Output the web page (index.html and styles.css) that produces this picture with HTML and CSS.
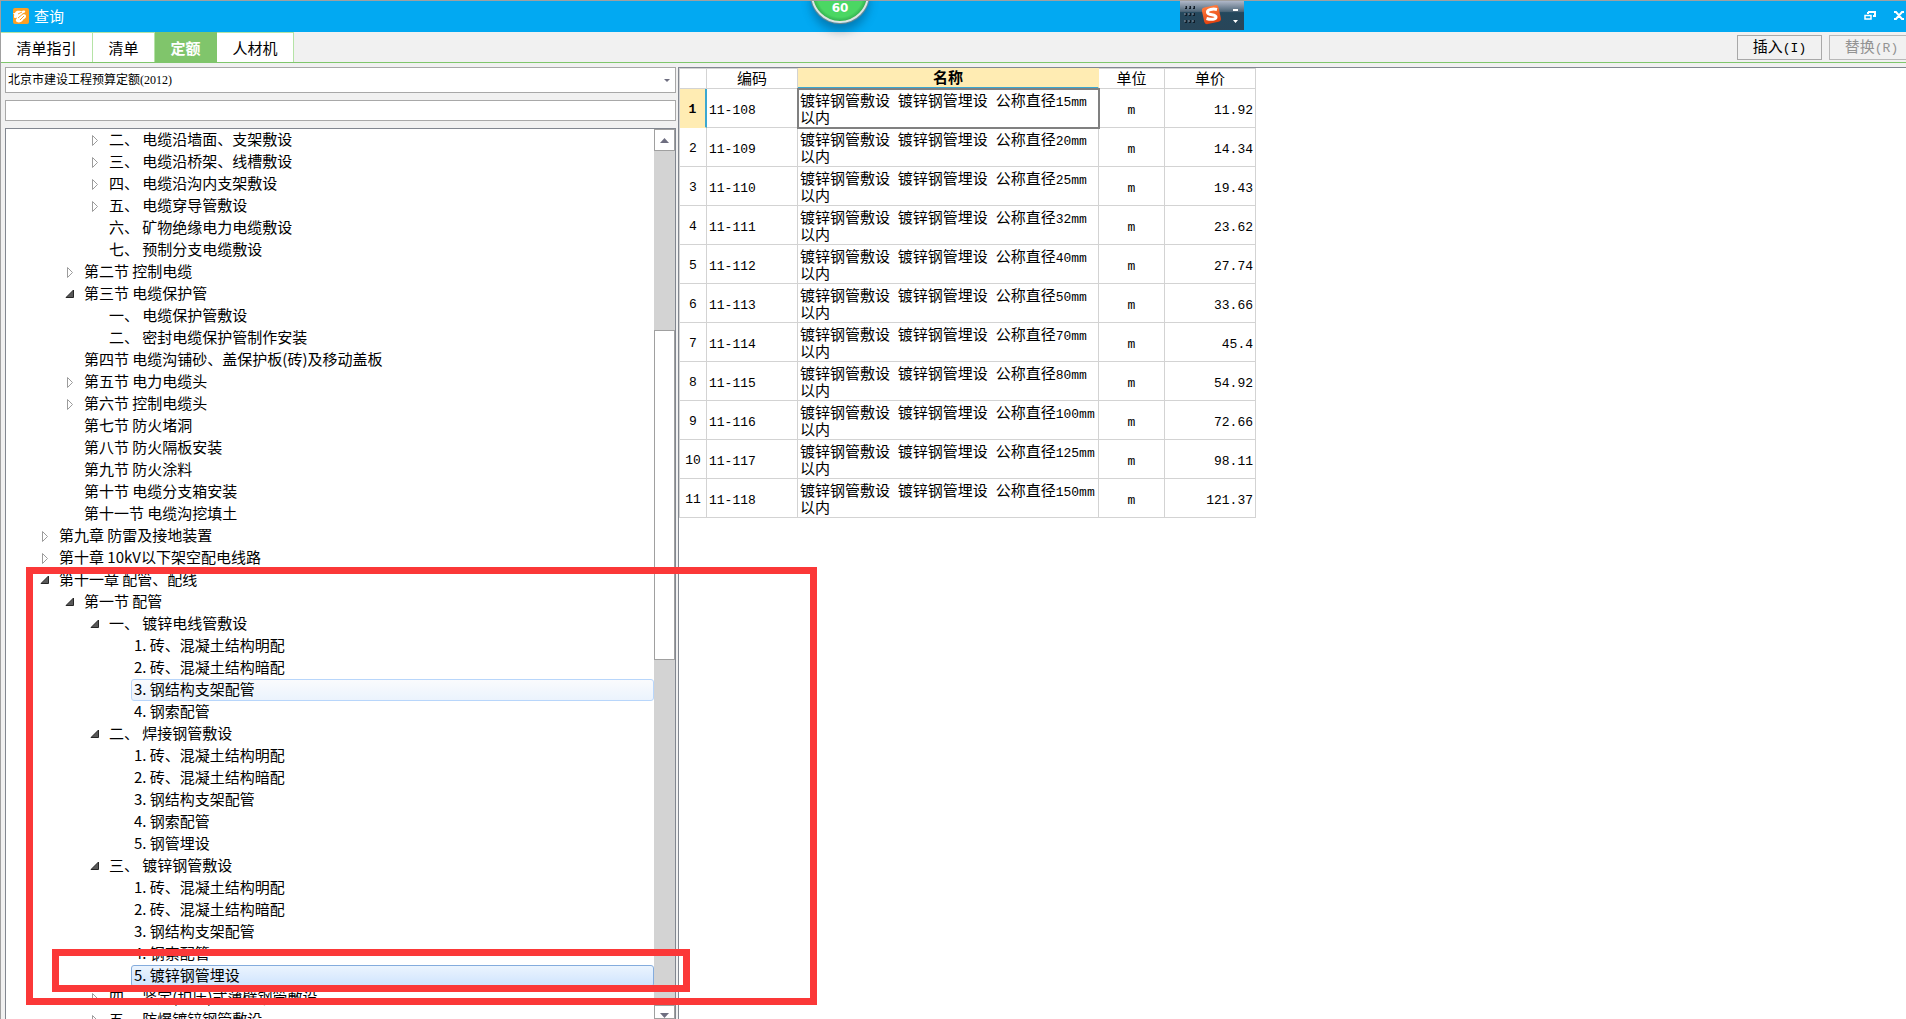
FILE: index.html
```html
<!DOCTYPE html>
<html lang="zh-CN">
<head>
<meta charset="utf-8">
<title>查询</title>
<link rel="stylesheet" href="styles.css">
</head>
<body>
<svg class="defs" aria-hidden="true">
  <symbol id="closed" viewBox="0 0 16 22"><path d="M2.5 6.500v10l5-5z" fill="#fff" stroke="#9c9c9c"/></symbol>
  <symbol id="open" viewBox="0 0 16 22"><path d="M8.500 7v7.500H1z" fill="#595959" stroke="#262626"/></symbol>
</svg>
<div class="window">
  <header class="titlebar">
    <svg class="app-icon" viewBox="0 0 16 16" aria-hidden="true">
      <rect width="16" height="16" rx="2" fill="#fba026"/>
      <path d="M2 5c1-3 4-2 6-2s3-1 4 0-1 2-3 3 4-1 4 2-2 2-3 4-4 3-6 2-1-3 0-4-3 1-3-1 1-2-1-4z" fill="#fff"/>
      <path d="M5 6l4-2M5 10l6-5M7 12l4-4" stroke="#fba026" fill="none"/>
    </svg>
    <h1>查询</h1>
    <div class="window-buttons">
      <button type="button" aria-label="还原"><svg width="12" height="10" viewBox="0 0 12 10"><path d="M4 1h7v4H9M4 1v2" fill="none" stroke="#fff" stroke-width="2"/><rect x="1" y="4.500" width="6" height="3.500" fill="none" stroke="#fff" stroke-width="1.500"/></svg></button>
      <button type="button" aria-label="关闭"><svg width="12" height="10" viewBox="0 0 12 10"><path d="M1 1h2l6 7h2M11 1H9L3 8H1" fill="none" stroke="#fff" stroke-width="2"/></svg></button>
    </div>
  </header>
  <div class="toolbar">
    <nav class="tabs">
      <button type="button" class="tab tab-wide">清单指引</button>
      <button type="button" class="tab">清单</button>
      <button type="button" class="tab active">定额</button>
      <button type="button" class="tab last">人材机</button>
    </nav>
    <div class="actions">
      <button type="button" class="action">插入<span class="latin">(I)</span></button>
      <button type="button" class="action" disabled>替换<span class="latin">(R)</span></button>
    </div>
  </div>
  <main class="content">
    <section class="side">
      <div class="combo">
        <select aria-label="定额库"><option>北京市建设工程预算定额(2012)</option></select>
        <svg class="combo-arrow" width="6" height="3" viewBox="0 0 6 3"><path d="M0 0h6L3 3z" fill="#6e6e80"/></svg>
      </div>
      <input class="search" type="text" aria-label="搜索">
      <div class="tree-box">
        <ul class="tree">
          <li class="l3"><svg><use href="#closed"/></svg><span>二、 电缆沿墙面、支架敷设</span></li>
          <li class="l3"><svg><use href="#closed"/></svg><span>三、 电缆沿桥架、线槽敷设</span></li>
          <li class="l3"><svg><use href="#closed"/></svg><span>四、 电缆沿沟内支架敷设</span></li>
          <li class="l3"><svg><use href="#closed"/></svg><span>五、 电缆穿导管敷设</span></li>
          <li class="l3"><svg></svg><span>六、 矿物绝缘电力电缆敷设</span></li>
          <li class="l3"><svg></svg><span>七、 预制分支电缆敷设</span></li>
          <li class="l2"><svg><use href="#closed"/></svg><span>第二节 控制电缆</span></li>
          <li class="l2"><svg><use href="#open"/></svg><span>第三节 电缆保护管</span></li>
          <li class="l3"><svg></svg><span>一、 电缆保护管敷设</span></li>
          <li class="l3"><svg></svg><span>二、 密封电缆保护管制作安装</span></li>
          <li class="l2"><svg></svg><span>第四节 电缆沟铺砂、盖保护板(砖)及移动盖板</span></li>
          <li class="l2"><svg><use href="#closed"/></svg><span>第五节 电力电缆头</span></li>
          <li class="l2"><svg><use href="#closed"/></svg><span>第六节 控制电缆头</span></li>
          <li class="l2"><svg></svg><span>第七节 防火堵洞</span></li>
          <li class="l2"><svg></svg><span>第八节 防火隔板安装</span></li>
          <li class="l2"><svg></svg><span>第九节 防火涂料</span></li>
          <li class="l2"><svg></svg><span>第十节 电缆分支箱安装</span></li>
          <li class="l2"><svg></svg><span>第十一节 电缆沟挖填土</span></li>
          <li class="l1"><svg><use href="#closed"/></svg><span>第九章 防雷及接地装置</span></li>
          <li class="l1"><svg><use href="#closed"/></svg><span>第十章 10kV以下架空配电线路</span></li>
          <li class="l1"><svg><use href="#open"/></svg><span>第十一章 配管、配线</span></li>
          <li class="l2"><svg><use href="#open"/></svg><span>第一节 配管</span></li>
          <li class="l3"><svg><use href="#open"/></svg><span>一、 镀锌电线管敷设</span></li>
          <li class="l4"><svg></svg><span>1. 砖、混凝土结构明配</span></li>
          <li class="l4"><svg></svg><span>2. 砖、混凝土结构暗配</span></li>
          <li class="l4 hovered"><svg></svg><span>3. 钢结构支架配管</span></li>
          <li class="l4"><svg></svg><span>4. 钢索配管</span></li>
          <li class="l3"><svg><use href="#open"/></svg><span>二、 焊接钢管敷设</span></li>
          <li class="l4"><svg></svg><span>1. 砖、混凝土结构明配</span></li>
          <li class="l4"><svg></svg><span>2. 砖、混凝土结构暗配</span></li>
          <li class="l4"><svg></svg><span>3. 钢结构支架配管</span></li>
          <li class="l4"><svg></svg><span>4. 钢索配管</span></li>
          <li class="l4"><svg></svg><span>5. 钢管埋设</span></li>
          <li class="l3"><svg><use href="#open"/></svg><span>三、 镀锌钢管敷设</span></li>
          <li class="l4"><svg></svg><span>1. 砖、混凝土结构明配</span></li>
          <li class="l4"><svg></svg><span>2. 砖、混凝土结构暗配</span></li>
          <li class="l4"><svg></svg><span>3. 钢结构支架配管</span></li>
          <li class="l4"><svg></svg><span>4. 钢索配管</span></li>
          <li class="l4 selected"><svg></svg><span>5. 镀锌钢管埋设</span></li>
          <li class="l3"><svg><use href="#closed"/></svg><span>四、 紧定(扣压)式薄壁钢管敷设</span></li>
          <li class="l3"><svg><use href="#closed"/></svg><span>五、 防爆镀锌钢管敷设</span></li>
        </ul>
        <div class="scrollbar">
          <button type="button" class="scroll-button" aria-label="向上"><svg width="9" height="5" viewBox="0 0 9 5"><path d="M0 5h9L4.500 0z" fill="#6e6e80"/></svg></button>
          <div class="track-before"></div>
          <div class="thumb"></div>
          <div class="track-after"></div>
          <button type="button" class="scroll-button" aria-label="向下"><svg width="9" height="5" viewBox="0 0 9 5"><path d="M0 0h9L4.500 5z" fill="#6e6e80"/></svg></button>
        </div>
      </div>
    </section>
    <section class="grid-pane">
      <table class="grid">
        <colgroup><col class="c-index"><col class="c-code"><col class="c-name"><col class="c-unit"><col class="c-price"></colgroup>
        <thead><tr><th></th><th>编码</th><th class="current">名称</th><th>单位</th><th>单价</th></tr></thead>
        <tbody>
          <tr class="current-row"><th>1</th><td>11-108</td><td class="name current-cell">镀锌钢管敷设<span class="latin"> </span>镀锌钢管埋设<span class="latin"> </span>公称直径<span class="latin">15mm</span><br>以内</td><td class="unit">m</td><td class="price">11.92</td></tr>
          <tr><th>2</th><td>11-109</td><td class="name">镀锌钢管敷设<span class="latin"> </span>镀锌钢管埋设<span class="latin"> </span>公称直径<span class="latin">20mm</span><br>以内</td><td class="unit">m</td><td class="price">14.34</td></tr>
          <tr><th>3</th><td>11-110</td><td class="name">镀锌钢管敷设<span class="latin"> </span>镀锌钢管埋设<span class="latin"> </span>公称直径<span class="latin">25mm</span><br>以内</td><td class="unit">m</td><td class="price">19.43</td></tr>
          <tr><th>4</th><td>11-111</td><td class="name">镀锌钢管敷设<span class="latin"> </span>镀锌钢管埋设<span class="latin"> </span>公称直径<span class="latin">32mm</span><br>以内</td><td class="unit">m</td><td class="price">23.62</td></tr>
          <tr><th>5</th><td>11-112</td><td class="name">镀锌钢管敷设<span class="latin"> </span>镀锌钢管埋设<span class="latin"> </span>公称直径<span class="latin">40mm</span><br>以内</td><td class="unit">m</td><td class="price">27.74</td></tr>
          <tr><th>6</th><td>11-113</td><td class="name">镀锌钢管敷设<span class="latin"> </span>镀锌钢管埋设<span class="latin"> </span>公称直径<span class="latin">50mm</span><br>以内</td><td class="unit">m</td><td class="price">33.66</td></tr>
          <tr><th>7</th><td>11-114</td><td class="name">镀锌钢管敷设<span class="latin"> </span>镀锌钢管埋设<span class="latin"> </span>公称直径<span class="latin">70mm</span><br>以内</td><td class="unit">m</td><td class="price">45.4</td></tr>
          <tr><th>8</th><td>11-115</td><td class="name">镀锌钢管敷设<span class="latin"> </span>镀锌钢管埋设<span class="latin"> </span>公称直径<span class="latin">80mm</span><br>以内</td><td class="unit">m</td><td class="price">54.92</td></tr>
          <tr><th>9</th><td>11-116</td><td class="name">镀锌钢管敷设<span class="latin"> </span>镀锌钢管埋设<span class="latin"> </span>公称直径<span class="latin">100mm</span><br>以内</td><td class="unit">m</td><td class="price">72.66</td></tr>
          <tr><th>10</th><td>11-117</td><td class="name">镀锌钢管敷设<span class="latin"> </span>镀锌钢管埋设<span class="latin"> </span>公称直径<span class="latin">125mm</span><br>以内</td><td class="unit">m</td><td class="price">98.11</td></tr>
          <tr><th>11</th><td>11-118</td><td class="name">镀锌钢管敷设<span class="latin"> </span>镀锌钢管埋设<span class="latin"> </span>公称直径<span class="latin">150mm</span><br>以内</td><td class="unit">m</td><td class="price">121.37</td></tr>
        </tbody>
      </table>
    </section>
  </main>
  <div class="speed-ball">60</div>
  <div class="ime-bar">
    <svg width="64" height="30" viewBox="0 0 64 30" aria-hidden="true">
      <defs>
        <linearGradient id="bar" x1="0" y1="0" x2="0" y2="1"><stop offset="0" stop-color="#b9bfd0"/><stop offset=".38" stop-color="#4f6779"/><stop offset=".42" stop-color="#24485d"/><stop offset="1" stop-color="#294558"/></linearGradient>
        <linearGradient id="logo" x1="0" y1="0" x2="0" y2="1"><stop offset="0" stop-color="#ff7a3c"/><stop offset="1" stop-color="#e2420f"/></linearGradient>
      </defs>
      <rect width="64" height="30" fill="url(#bar)"/>
      <path d="M5 7.500h2m2 0h2m2 0h2M5 14.500h2m2 0h2m2 0h2M5 21.500h2m2 0h2m2 0h2" stroke="#101c28" stroke-width="3"/>
      <path d="M4 7h2m2 0h2m2 0h2M4 14h2m2 0h2m2 0h2M4 21h2m2 0h2m2 0h2" stroke="#8f9ba8" stroke-width="1"/>
      <rect x="23" y="6" width="17" height="17" rx="3" fill="url(#logo)" transform="rotate(-12 32 15)"/>
      <path d="M37 9.500c-4-1-10 0-9.500 3 .5 3 8.500 1.500 8.500 4.500 0 2.500-5 3-9.500 1.500" fill="none" stroke="#fff" stroke-width="3"/>
      <path d="M53 9h5v2h-5zM53 20h5l-2.500 3z" fill="#fff"/>
    </svg>
  </div>
  <div class="mark mark-outer"></div>
  <div class="mark mark-inner"></div>
</div>
</body>
</html>
```
FILE: styles.css
```css
* { box-sizing: border-box; }
body {
  margin: 0;
  font: 15px/20px "Noto Sans CJK SC", sans-serif;
  color: #000;
}
button, input, select { font: inherit; color: inherit; margin: 0; padding: 0; border-radius: 0; }
.defs { position: absolute; width: 0; height: 0; }
.window {
  position: relative;
  display: flex;
  flex-direction: column;
  height: 100vh;
  overflow: hidden;
  background: #f1f1f1;
  border-top: 1px solid #a0a0a0;
  border-left: 1px solid #a0a0a0;
}
.latin { font-family: "Liberation Mono", monospace; font-size: 13px; }

/* title bar */
.titlebar {
  flex: none;
  display: flex;
  align-items: center;
  height: 31px;
  padding: 0 0 2px 12px;
  background: #02a9f2;
  color: #fff;
}
.app-icon { width: 16px; height: 16px; }
h1 { margin: 0 0 0 5px; font-size: 15px; font-weight: 400; }
.window-buttons { display: flex; gap: 17px; margin-left: auto; padding-right: 1px; }
.window-buttons button { display: flex; border: 0; background: none; }

/* tabs and actions */
.toolbar {
  flex: none;
  display: flex;
  justify-content: space-between;
  height: 31px;
  border-bottom: 1px solid #7fc66c;
}
.tabs { display: flex; }
.tab {
  width: 62px;
  border: 0 solid #b5e3a6;
  border-width: 1px 1px 0 0;
  background: #fff;
}
.tab-wide { width: 92px; }
.tab.active { background: #80c56b; border-color: #80c56b; color: #fff; font-weight: 700; }
.tab.last { width: 77px; }
.actions { display: flex; gap: 7px; padding-top: 3px; margin-right: -8px; }
.action { width: 85px; height: 25px; border: 1px solid #a8a8a8; background: #f1f1f1; }
.action:disabled { border-color: #b8b8b8; color: #939393; }

/* left pane */
.content { flex: 1; display: flex; gap: 2px; min-height: 0; padding-top: 4px; }
.side { flex: 0 0 675px; display: flex; flex-direction: column; padding-left: 4px; min-height: 0; }
.combo { position: relative; flex: none; height: 26px; }
.combo select {
  appearance: none;
  width: 100%;
  height: 100%;
  padding-left: 2px;
  border: 1px solid #a8a8a8;
  background: #fff;
  font: 12px/20px "Liberation Serif", "Noto Sans CJK SC", serif;
}
.combo-arrow { position: absolute; right: 6px; top: 12px; }
.search {
  flex: none;
  width: 100%;
  height: 21px;
  margin: 7px 0;
  border: 1px solid #a8a8a8;
  background: #fff;
}
.tree-box {
  flex: 1;
  display: flex;
  min-height: 0;
  border: 1px solid #828790;
  border-bottom: 0;
  background: #fff;
}
.tree { flex: 1; margin: 0; padding: 0; list-style: none; overflow: hidden; }
.tree li { display: flex; height: 22px; }
.tree svg { flex: none; width: 16px; height: 22px; }
.tree span {
  flex: 1;
  padding-left: 2px;
  border: 1px solid transparent;
  border-radius: 3px;
  line-height: 18px;
  white-space: nowrap;
}
.l1 { padding-left: 34px; }
.l2 { padding-left: 59px; }
.l3 { padding-left: 84px; }
.l4 { padding-left: 109px; }
.tree .hovered span { border-color: #b8d6fb; background: linear-gradient(#fafbfd, #ebf3fd); }
.tree .selected span { border-color: #84acdd; background: linear-gradient(#ebf4fe, #cfe4fe); }

.scrollbar { flex: 0 0 21px; display: flex; flex-direction: column; background: #d3d3d3; }
.scroll-button {
  flex: none;
  display: flex;
  align-items: center;
  justify-content: center;
  height: 22px;
  border: 1px solid #a0a0a0;
  background: #fff;
}
.scroll-button:last-child { height: 14px; align-items: flex-end; }
.track-before { flex: 179; }
.thumb { flex: 329; border: 1px solid #a0a0a0; background: #fff; }
.track-after { flex: 346; }

/* price grid */
.grid-pane {
  flex: 1;
  min-width: 0;
  border: 1px solid #828790;
  border-width: 1px 0 0 1px;
  background: #fff;
}
.grid { table-layout: fixed; width: 577px; border-spacing: 0; border-left: 1px solid #d3d3d3; }
.c-index { width: 27px; }
.c-code { width: 91px; }
.c-name { width: 301px; }
.c-unit { width: 66px; }
.c-price { width: 91px; }
.grid th, .grid td {
  padding: 0 2px;
  border: 0 solid #d3d3d3;
  border-width: 0 1px 1px 0;
  font-weight: 400;
  white-space: nowrap;
}
.grid thead th { height: 21px; padding-bottom: 2px; line-height: 16px; border-top-width: 1px; }
.grid thead .current {
  background: #ffecb3;
  border-color: #ffecb3;
  border-bottom: 2px solid #3ba7d0;
  font-weight: 700;
}
.grid tbody th { padding: 4px 0 0; font: 13px/16px "Liberation Mono", monospace; }
.grid td { height: 39px; padding-top: 6px; font: 13px/16px "Liberation Mono", monospace; }
.grid .name { padding-top: 0; font: 15px/16px "Noto Sans CJK SC", sans-serif; }
.grid .latin { line-height: 1; }
.grid .unit { text-align: center; }
.grid .price { text-align: right; }
.grid .current-row th {
  background: #ffecb3;
  border-right: 2px solid #3ba7d0;
  border-bottom-color: #ffecb3;
  font-weight: 700;
}
.grid .current-cell { outline: 2px solid #808080; outline-offset: -1px; }

/* floating desktop widgets */
.speed-ball {
  position: absolute;
  left: 810px;
  top: -36px;
  width: 58px;
  height: 58px;
  padding-top: 31px;
  border: 2px solid #dfe5e2;
  border-radius: 50%;
  background: radial-gradient(circle, #4bd763 60%, #35b552 70%);
  box-shadow: 0 0 1px 1px #7d8a8a, 0 8px 10px rgba(0, 40, 70, .35);
  color: #fff;
  font: 700 12px/20px "DejaVu Sans", sans-serif;
  text-align: center;
}
.ime-bar { position: absolute; left: 1179px; top: -1px; display: flex; }

/* red annotation frames */
.mark { position: absolute; border: 7px solid #fb3838; pointer-events: none; }
.mark-outer { left: 25px; top: 566px; width: 791px; height: 438px; }
.mark-inner { left: 51px; top: 948px; width: 638px; height: 43px; }
```
